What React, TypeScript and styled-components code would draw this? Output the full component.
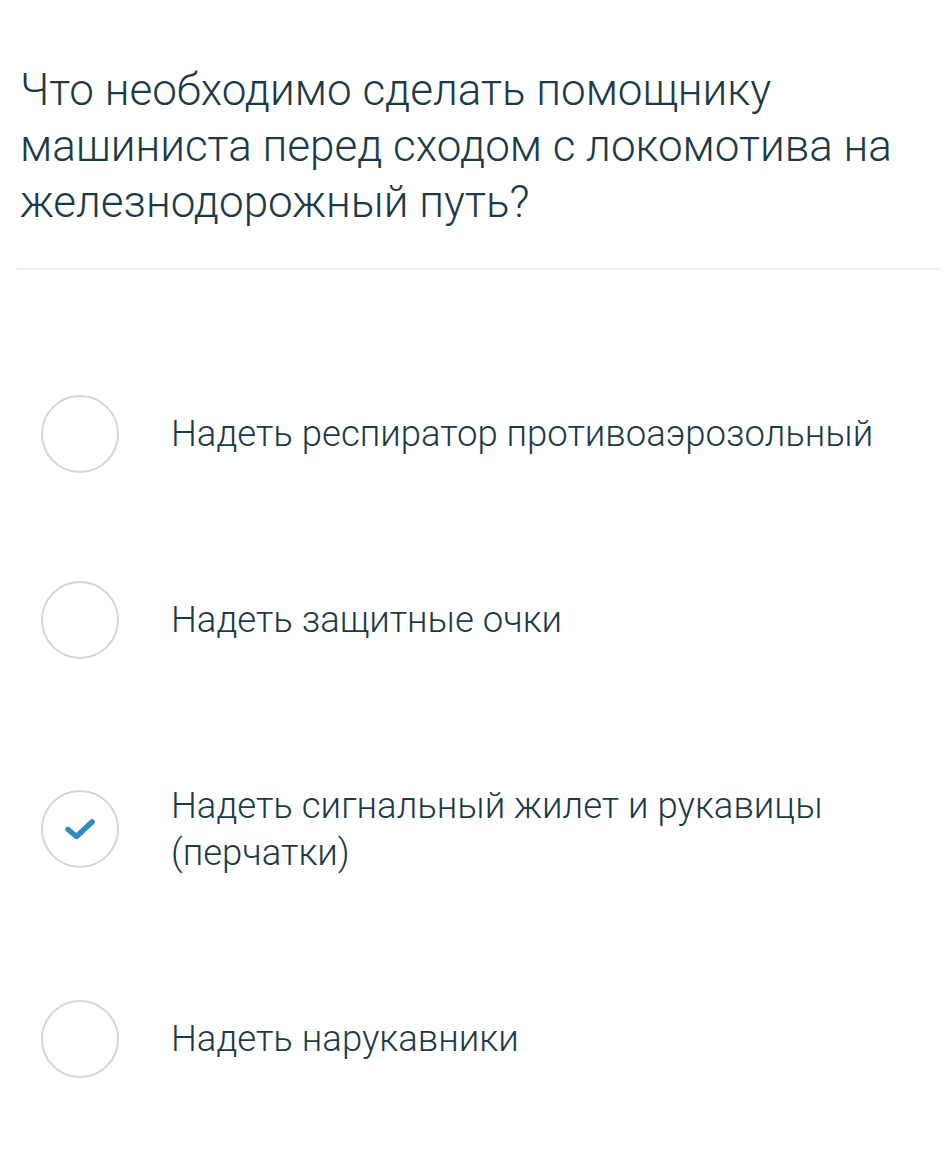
import styled, { createGlobalStyle } from 'styled-components';

const GlobalStyle = createGlobalStyle`
  body {
    margin: 0;
    background: #ffffff;
    font-family: Roboto, "Liberation Sans", sans-serif;
  }
`;

interface Option {
  text: string;
  checked?: boolean;
}

const options: Option[] = [
  { text: 'Надеть респиратор противоаэрозольный' },
  { text: 'Надеть защитные очки' },
  { text: 'Надеть сигнальный жилет и рукавицы (перчатки)', checked: true },
  { text: 'Надеть нарукавники' },
];

const Page = styled.div`
  display: flex;
  flex-direction: column;
  width: 948px;
  min-height: 1171px;
`;

const Question = styled.h1`
  margin: 0;
  padding: 62px 40px 0 20px;
  font-size: 44px;
  font-weight: 300;
  line-height: 56px;
  color: #1d3b47;
`;

const Divider = styled.hr`
  margin: 38px 8px 0 17px;
  border: none;
  height: 2px;
  background: #ececec;
`;

const List = styled.div`
  display: flex;
  flex-direction: column;
  gap: 95px;
  padding: 118px 0 0 41px;
`;

const Row = styled.label`
  display: flex;
  align-items: center;
  gap: 52px;
  cursor: pointer;
`;

const Radio = styled.span`
  flex: none;
  display: flex;
  align-items: center;
  justify-content: center;
  width: 78px;
  height: 78px;
  box-sizing: border-box;
  border: 2px solid #d6d6d6;
  border-radius: 50%;
  color: #2b8dc2;
`;

const Label = styled.span`
  padding: 22px 0;
  max-width: 710px;
  font-size: 36.5px;
  font-weight: 300;
  line-height: 47px;
  color: #1d3b47;
`;

const Check = () => (
  <svg width="32" height="22" viewBox="0 0 32 22">
    <path d="M4 11.5 L12.5 18.5 L28 4" fill="none" stroke="currentColor" strokeWidth="5.5" strokeLinecap="round" strokeLinejoin="round" />
  </svg>
);

export default function App() {
  return (
    <Page>
      <GlobalStyle />
      <Question>Что необходимо сделать помощнику машиниста перед сходом с локомотива на железнодорожный путь?</Question>
      <Divider />
      <List>
        {options.map((o) => (
          <Row key={o.text}>
            <Radio>{o.checked && <Check />}</Radio>
            <Label>{o.text}</Label>
          </Row>
        ))}
      </List>
    </Page>
  );
}
